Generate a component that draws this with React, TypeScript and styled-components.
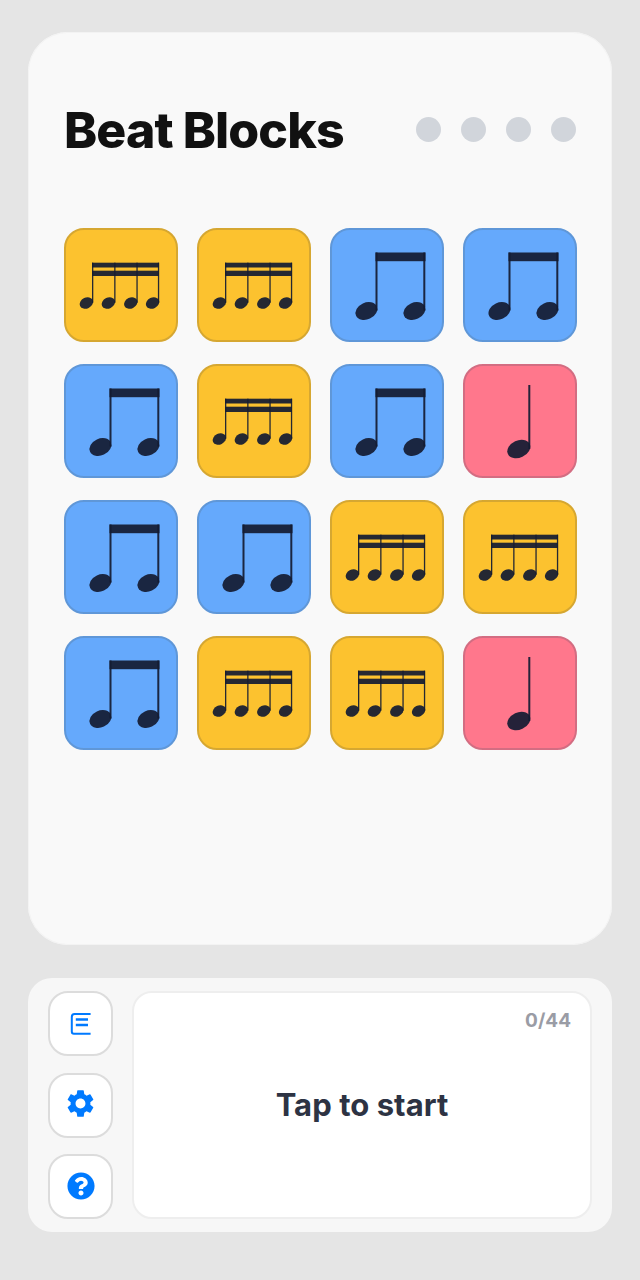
import React from "react";
import styled, { createGlobalStyle } from "styled-components";
import { FaQuestionCircle } from "react-icons/fa";
import { MdSettings } from "react-icons/md";

const Global = createGlobalStyle`
  html, body { margin: 0; padding: 0; background: #e5e5e5; }
  body { font-family: Inter, "Liberation Sans", sans-serif; }
`;
const Page = styled.div`
  width: 640px; height: 1280px; box-sizing: border-box; padding: 32px 28px 48px;
  display: flex; flex-direction: column; gap: 33px; background: #e5e5e5;
`;
const Board = styled.main`
  height: 913px; box-sizing: border-box; padding: 72px 35px 0 36px; background: #f9f9f9; border-radius: 40px;
  box-shadow: inset 0 0 0 1px #f3f3f3;
`;
const Header = styled.header`
  display: flex; justify-content: space-between; align-items: center; height: 52px;
`;
const Title = styled.h1`
  margin: 0; font-size: 50px; line-height: 52px; font-weight: 800; letter-spacing: -0.9px; color: #111;
`;
const Dots = styled.div`display: flex; gap: 20px; margin: -1px 1px 0 0;`;
const Dot = styled.span`width: 25px; height: 25px; border-radius: 50%; background: #d1d5db;`;
const Grid = styled.div`
  margin-top: 72px; display: grid; grid-template-columns: repeat(4, 114px); column-gap: 19px; row-gap: 22px;
`;
const colors = {
  s: ["#fcc22f", "#d6a731"], e: ["#65a9fc", "#5f97d8"], q: ["#ff778c", "#d36d82"],
};
type Kind = keyof typeof colors;
const Tile = styled.button<{ $kind: Kind }>`
  width: 114px; height: 114px; padding: 0; box-sizing: border-box; border-radius: 20px;
  background: ${(p) => colors[p.$kind][0]}; border: 2px solid ${(p) => colors[p.$kind][1]};
  display: block;
  svg { display: block; margin: -2px; }
`;
const Note = ({ kind }: { kind: Kind }) => (
  <svg width="114" height="114" viewBox="0 0 114 114" fill="#141c33" fillOpacity={0.93}>
    {kind === "q" && (
      <>
        <rect x="65.3" y="21" width="2" height="64" />
        <ellipse cx="55.8" cy="85" rx="12" ry="8.6" transform="rotate(-25 55.8 85)" />
      </>
    )}
    {kind === "e" && (
      <>
        <rect x="45.5" y="24.5" width="50" height="8.7" />
        <rect x="45.5" y="24.5" width="2" height="58" />
        <rect x="93.3" y="24.5" width="2" height="58" />
        <ellipse cx="36.4" cy="83" rx="11.4" ry="8.4" transform="rotate(-25 36.4 83)" />
        <ellipse cx="84.4" cy="83" rx="11.4" ry="8.4" transform="rotate(-25 84.4 83)" />
      </>
    )}
    {kind === "s" && (
      <>
        <rect x="28" y="34.7" width="67" height="4.8" />
        <rect x="28" y="42.7" width="67" height="5.3" />
        {[28, 50.2, 72.4, 93.9].map((x) => (
          <rect key={x} x={x} y="34.7" width="1.3" height="40" />
        ))}
        {[22.4, 44.4, 66.8, 88.6].map((x) => (
          <ellipse key={x} cx={x} cy="75" rx="7" ry="5.4" transform={`rotate(-25 ${x} 75)`} />
        ))}
      </>
    )}
  </svg>
);
const Panel = styled.section`
  height: 254px; box-sizing: border-box; padding: 13px 20px 13px 20px; background: #f7f7f7; border-radius: 24px;
  display: flex; gap: 19px;
`;
const Side = styled.div`display: flex; flex-direction: column; justify-content: space-between;`;
const IconBtn = styled.button`
  width: 65px; height: 65px; padding: 0; box-sizing: border-box; background: #fff; border: 2px solid #dcdcdc;
  border-radius: 20px; display: flex; align-items: center; justify-content: center; color: #007aff;
`;
const Screen = styled.div`
  position: relative; flex: 1; box-sizing: border-box; background: #fff; border: 2px solid #eeeeee; border-radius: 20px;
  display: flex; align-items: center; justify-content: center;
`;
const Count = styled.span`
  position: absolute; top: 17px; right: 19px; font-size: 19px; line-height: 22px; font-weight: 700; color: #9a9ca5;
`;
const Prompt = styled.div`font-size: 31px; font-weight: 700; color: #2d3343; letter-spacing: 0.05px; margin-top: -1px;`;
const GearWrap = styled.span`display: flex; margin-top: -3px;`;
const HelpWrap = styled.span`display: flex; margin-top: -1px;`;

const layout: Kind[] = ["s","s","e","e","e","s","e","q","e","e","s","s","e","s","s","q"];

const BookIcon = () => (
  <svg width="28" height="28" viewBox="0 0 28 28" fill="none" stroke="#007aff">
    <path d="M23.6 4H7.6Q4.8 4 4.8 7V21.5Q4.8 23.7 7 23.7H23.6" strokeWidth="2" />
    <path d="M8.8 9.5H21M8.8 15H21" strokeWidth="2.4" />
  </svg>
);

export default function App() {
  return (
    <Page>
      <Global />
      <Board>
        <Header>
          <Title>Beat Blocks</Title>
          <Dots><Dot /><Dot /><Dot /><Dot /></Dots>
        </Header>
        <Grid>
          {layout.map((k, i) => (
            <Tile key={i} $kind={k}><Note kind={k} /></Tile>
          ))}
        </Grid>
      </Board>
      <Panel>
        <Side>
          <IconBtn><BookIcon /></IconBtn>
          <IconBtn><GearWrap><MdSettings size={33} /></GearWrap></IconBtn>
          <IconBtn><HelpWrap><FaQuestionCircle size={28} /></HelpWrap></IconBtn>
        </Side>
        <Screen>
          <Count>0/44</Count>
          <Prompt>Tap to start</Prompt>
        </Screen>
      </Panel>
    </Page>
  );
}
